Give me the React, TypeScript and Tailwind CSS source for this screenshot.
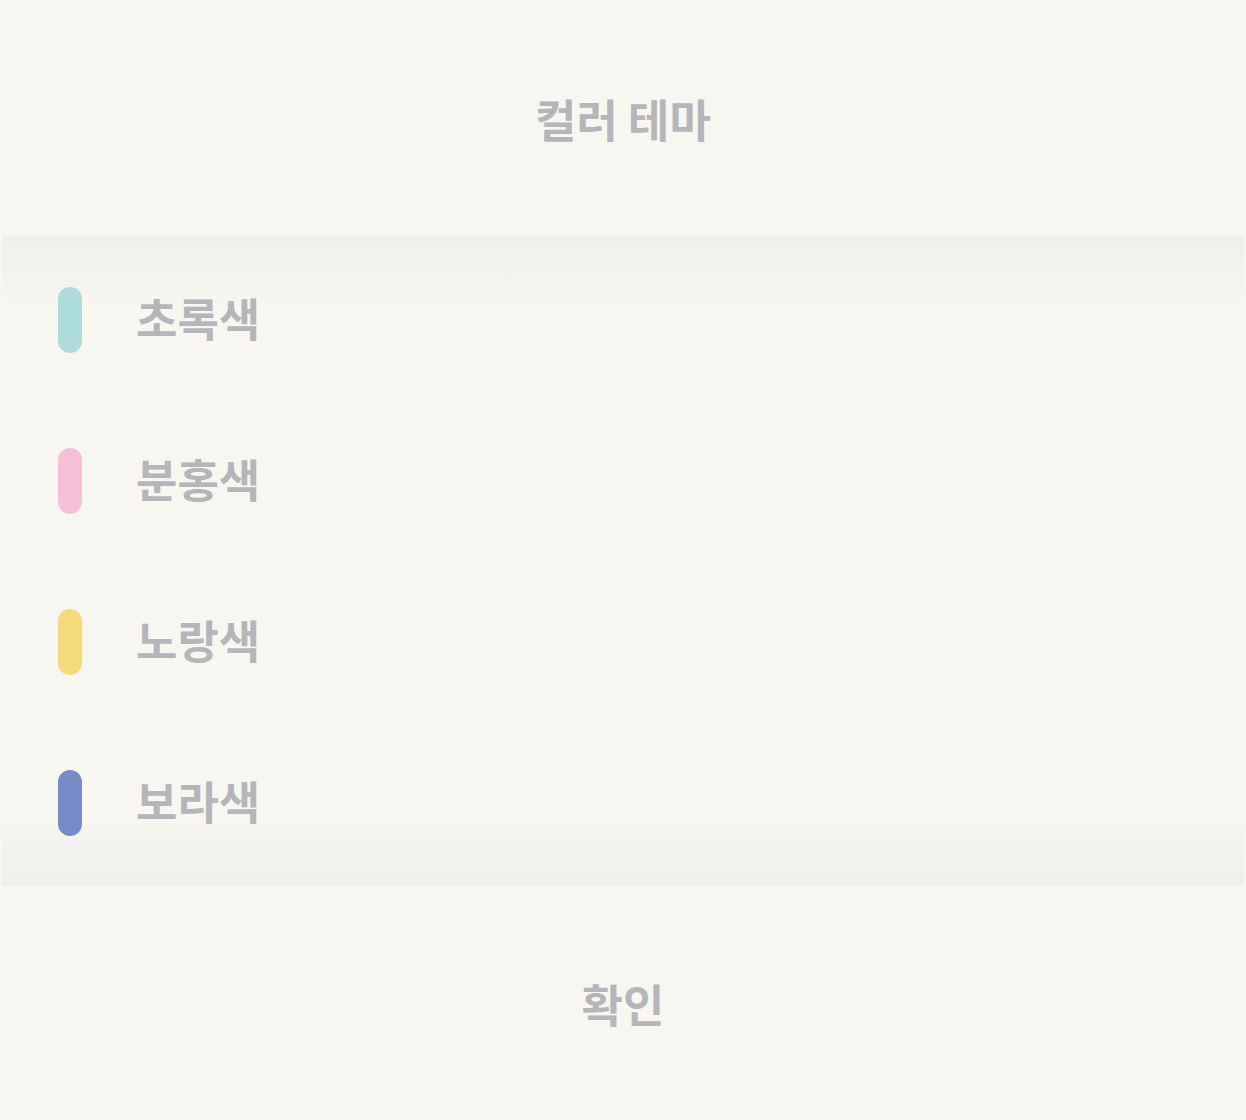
export default function App() {
  const items = [
    { label: "초록색", color: "bg-[#aedcdb]" },
    { label: "분홍색", color: "bg-[#f6bfd6]" },
    { label: "노랑색", color: "bg-[#f6d97b]" },
    { label: "보라색", color: "bg-[#778bc7]" },
  ];
  return (
    <div
      className="w-[1246px] h-[1120px] bg-[#f7f6f0] flex flex-col text-[#b6b5b9] font-bold"
      style={{ fontFamily: '"Noto Sans CJK KR", "Noto Sans", sans-serif' }}
    >
      <div className="h-[236px] flex items-center justify-center text-[45px] leading-none">
        컬러 테마
      </div>
      <div className="relative mx-[2px] h-[650px] py-[3px] flex flex-col">
        <div className="absolute inset-x-0 top-0 h-[70px] bg-gradient-to-b from-[#efefeb] to-transparent pointer-events-none" />
        <div className="absolute inset-x-0 bottom-0 h-[70px] bg-gradient-to-t from-[#efefeb] to-transparent pointer-events-none" />
        {items.map((it) => (
          <div key={it.label} className="relative h-[161px] flex items-center pl-[56px]">
            <div className={`w-[24px] h-[66px] rounded-full ${it.color}`} />
            <div className="ml-[54px] text-[45px] leading-none -translate-y-[2px]">{it.label}</div>
          </div>
        ))}
      </div>
      <div className="flex-1 flex items-center justify-center text-[45px] leading-none">
        확인
      </div>
    </div>
  );
}
